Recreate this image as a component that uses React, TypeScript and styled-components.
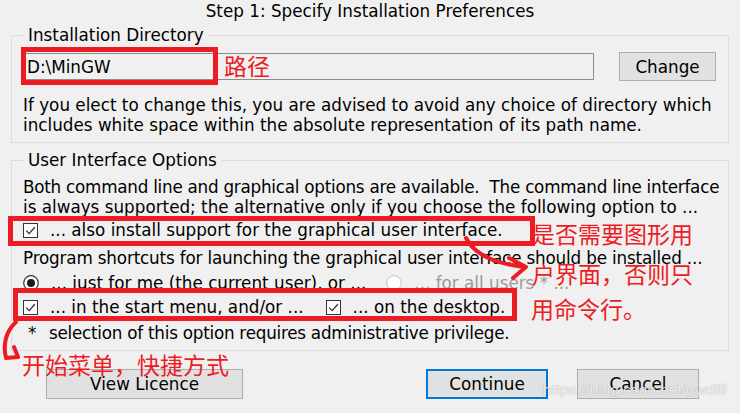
import React from 'react'
import styled, { createGlobalStyle } from 'styled-components'

const GlobalStyle = createGlobalStyle`
    html, body {
        margin: 0;
        padding: 0;
        background: #f0f0f0;
    }
    body {
        font-family: "DejaVu Sans", Verdana, sans-serif;
        font-size: 16.8px;
        color: #000;
    }
    * {
        box-sizing: border-box;
    }
`

const Window = styled.div`
    position: relative;
    width: 740px;
    height: 413px;
    padding: 0 11px;
    overflow: hidden;
`

const Title = styled.div`
    height: 22px;
    line-height: 22px;
    text-align: center;
`

const Group = styled.fieldset<{ $top: number }>`
    margin: ${p => p.$top}px 0 0;
    padding: 7px 12px 7px 11px;
    border: 1px solid #dcdcdc;
    min-width: 0;
`

const Legend = styled.legend`
    padding: 0 4px;
    margin-left: 1px;
    line-height: 20px;
`

const DirRow = styled.div`
    display: flex;
    align-items: center;
    gap: 25px;
    height: 29px;
    margin-left: -1px;
`

const PathInput = styled.input`
    flex: 1;
    height: 27px;
    padding: 0 4px;
    border: 1px solid #8c8c8c;
    background: #f0f0f0;
    font: inherit;
    color: #000;
    outline: none;
`

const Button = styled.button<{ $width: number; $height?: number; $primary?: boolean }>`
    width: ${p => p.$width}px;
    height: ${p => p.$height || 30}px;
    padding: 0;
    background: #e1e1e1;
    border: ${p => (p.$primary ? '2px solid #0078d7' : '1px solid #adadad')};
    font: inherit;
    color: #000;
`

const Text = styled.div<{ $top?: number }>`
    margin-top: ${p => p.$top || 0}px;
    line-height: 20px;
    white-space: pre;
`

const Line = styled.span<{ $spacing?: number }>`
    display: block;
    letter-spacing: ${p => p.$spacing || 0}px;
`

const OptionRow = styled.div<{ $height: number; $top?: number; $spacing?: number }>`
    display: flex;
    align-items: center;
    height: ${p => p.$height}px;
    margin-top: ${p => p.$top || 0}px;
    letter-spacing: ${p => p.$spacing || 0}px;
    white-space: pre;
`

const Item = styled.span<{ $gap?: number; $muted?: boolean }>`
    display: inline-flex;
    align-items: center;
    gap: 12px;
    margin-left: ${p => p.$gap || 0}px;
    color: ${p => (p.$muted ? '#9a9a9a' : 'inherit')};
`

const Star = styled.span`
    width: 26px;
    padding-left: 5px;
`

const ButtonRow = styled.div`
    display: flex;
    justify-content: space-between;
    margin-top: 18px;
    padding: 0 30px 0 35px;
`

const ButtonGroup = styled.div`
    display: flex;
    gap: 29px;
`

const Overlay = styled.div`
    position: absolute;
    inset: 0;
    pointer-events: none;
`

const RedBox = styled.div<{ $x: number; $y: number; $w: number; $h: number }>`
    position: absolute;
    left: ${p => p.$x}px;
    top: ${p => p.$y}px;
    width: ${p => p.$w}px;
    height: ${p => p.$h}px;
    border: 5px solid #ed1c24;
`

const Note = styled.span<{ $x: number; $y: number }>`
    position: absolute;
    left: ${p => p.$x}px;
    top: ${p => p.$y}px;
    font-family: "Noto Sans CJK SC", sans-serif;
    font-size: 23px;
    line-height: 23px;
    color: #ed1c24;
    white-space: nowrap;
`

const Watermark = styled.span`
    position: absolute;
    left: 543px;
    top: 380px;
    font-family: "Liberation Sans", Arial, sans-serif;
    font-size: 15.5px;
    line-height: 20px;
    color: rgba(255, 255, 255, 0.85);
    text-shadow: 0 0 1px rgba(0, 0, 0, 0.4);
`

const ArrowLayer = styled.svg`
    position: absolute;
    left: 0;
    top: 0;
`

const CheckIcon = () => (
    <svg width="15" height="15" viewBox="0 0 15 15">
        <rect x="0.5" y="0.5" width="14" height="14" fill="#fcfcfc" stroke="#333" />
        <path d="M3.2 7.6 L6.2 10.6 L11.8 4.2" fill="none" stroke="#333" strokeWidth="1.3" />
    </svg>
)

const RadioIcon = ({ on }: { on?: boolean }) => (
    <svg width="16" height="16" viewBox="0 0 16 16">
        <circle cx="8" cy="8" r="7.3" fill="#fff" stroke={on ? '#333' : '#cfcfcf'} strokeWidth="1.2" />
        {on && <circle cx="8" cy="8" r="4" fill="#1a1a1a" />}
    </svg>
)

const App = () => {
    return (
        <>
            <GlobalStyle />
            <Window>
                <Title>Step 1: Specify Installation Preferences</Title>

                <Group $top={3}>
                    <Legend>Installation Directory</Legend>
                    <DirRow>
                        <PathInput readOnly value="D:\MinGW" />
                        <Button $width={97} $height={29}>Change</Button>
                    </DirRow>
                    <Text $top={14}>
                        <Line>If you elect to change this, you are advised to avoid any choice of directory which</Line>
                        <Line>includes white space within the absolute representation of its path name.</Line>
                    </Text>
                </Group>

                <Group $top={7}>
                    <Legend>User Interface Options</Legend>
                    <Text>
                        <Line $spacing={-0.25}>
                            {'Both command line and graphical options are available.  The command line interface'}
                        </Line>
                        <Line>is always supported; the alternative only if you choose the following option to ...</Line>
                    </Text>
                    <OptionRow $height={26}>
                        <Item><CheckIcon />... also install support for the graphical user interface.</Item>
                    </OptionRow>
                    <Text $top={5}>
                        <Line $spacing={-0.17}>
                            Program shortcuts for launching the graphical user interface should be installed ...
                        </Line>
                    </Text>
                    <OptionRow $height={25} $top={2}>
                        <Item><RadioIcon on />... just for me (the current user), or ...</Item>
                        <Item $gap={20} $muted><RadioIcon />... for all users * ...</Item>
                    </OptionRow>
                    <OptionRow $height={24}>
                        <Item><CheckIcon />... in the start menu, and/or ...</Item>
                        <Item $gap={22}><CheckIcon />... on the desktop.</Item>
                    </OptionRow>
                    <OptionRow $height={20} $top={4} $spacing={-0.25}>
                        <Star>*</Star>selection of this option requires administrative privilege.
                    </OptionRow>
                </Group>

                <ButtonRow>
                    <Button $width={197}>View Licence</Button>
                    <ButtonGroup>
                        <Button $width={122} $primary>Continue</Button>
                        <Button $width={122}>Cancel</Button>
                    </ButtonGroup>
                </ButtonRow>

                <Overlay>
                    <RedBox $x={21} $y={47} $w={197} $h={38} />
                    <RedBox $x={8} $y={216} $w={527} $h={30} />
                    <RedBox $x={13} $y={288} $w={504} $h={33} />

                    <Note $x={224} $y={54}>路径</Note>
                    <Note $x={532} $y={222}>是否需要图形用</Note>
                    <Note $x={532} $y={262}>户界面，否则只</Note>
                    <Note $x={531} $y={297}>用命令行。</Note>
                    <Note $x={22} $y={353}>开始菜单，快捷方式</Note>

                    <ArrowLayer width="740" height="413" viewBox="0 0 740 413">
                        <g fill="none" stroke="#ed1c24" strokeWidth="4" strokeLinecap="round" strokeLinejoin="round">
                            <path d="M466 238 Q478 262 525 267" />
                            <path d="M509 258 L526 267 L513 278" />
                            <path d="M16 322 C5 332 3 346 6 358 L18 357" />
                            <path d="M14 347 L18 357" />
                        </g>
                    </ArrowLayer>

                    <Watermark>https://blog.csdn.net/gwdfff</Watermark>
                </Overlay>
            </Window>
        </>
    )
}

export default App
